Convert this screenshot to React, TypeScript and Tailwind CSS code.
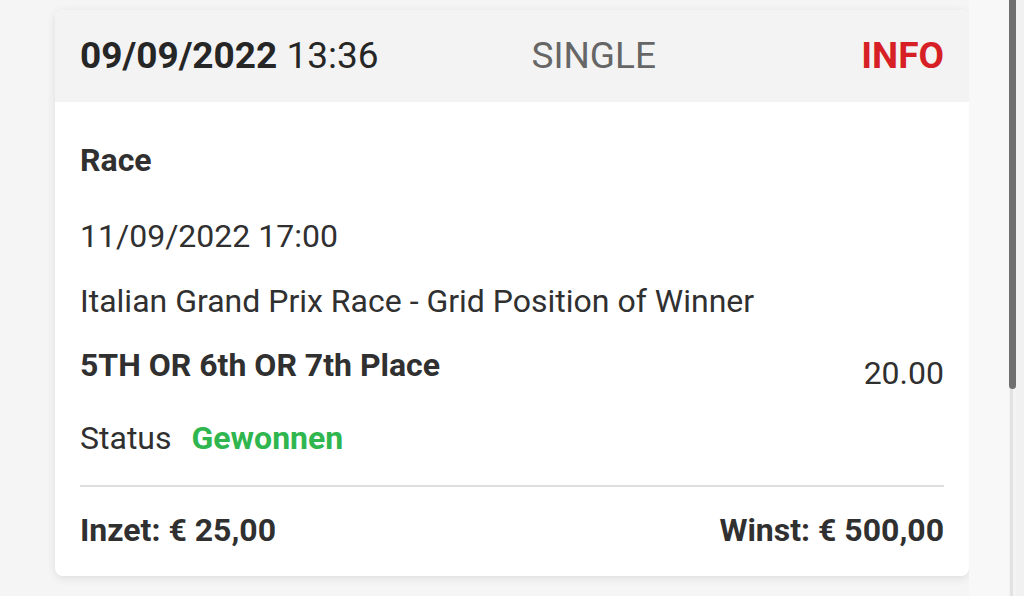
import React from 'react';

const BetCard = () => {
  return (
    <div className="w-[914px] h-[566px] bg-white rounded-lg shadow-[0_2px_10px_rgba(0,0,0,0.10)] overflow-hidden flex flex-col">
      {/* Header */}
      <div className="h-[92px] bg-[#f3f3f3] px-[25px] grid grid-cols-3 items-center text-[37px] leading-[44px]">
        <div className="text-[#262626] whitespace-nowrap">
          <span className="font-bold">09/09/2022</span> 13:36
        </div>
        <div className="text-right text-[#666666]">SINGLE</div>
        <div className="text-right font-bold text-[#d71f26]">INFO</div>
      </div>

      {/* Body */}
      <div className="px-[25px] pt-[38px] text-[32px] leading-[40px] text-[#303030]">
        <div className="font-bold">Race</div>
        <div className="mt-[36px]">11/09/2022 17:00</div>
        <div className="mt-[25px]">Italian Grand Prix Race - Grid Position of Winner</div>
        <div className="mt-[24px] flex justify-between items-start">
          <span className="font-bold">5TH OR 6th OR 7th Place</span>
          <span className="mt-[8px]">20.00</span>
        </div>
        <div className="mt-[25px] flex gap-[20px]">
          <span>Status</span>
          <span className="font-bold text-[#2fb64f]">Gewonnen</span>
        </div>
        <div className="mt-[27px] h-[2px] bg-[#dedede]"></div>
        <div className="mt-[23px] flex justify-between font-bold">
          <span>Inzet: € 25,00</span>
          <span>Winst: € 500,00</span>
        </div>
      </div>
    </div>
  );
};

export default function App() {
  return (
    <div className="w-[1024px] h-[596px] flex bg-[#f5f5f5] overflow-hidden" style={{ fontFamily: 'Roboto, "Open Sans", sans-serif' }}>
      <div className="pl-[55px] pt-[10px]">
        <BetCard />
      </div>
      <div className="flex-1 bg-[#f8f8f8]"></div>
      {/* Scrollbar */}
      <div className="w-[7px] flex flex-col bg-[#f3f3f3]">
        <div className="h-[389px] bg-[#6f6f6f] rounded-b-sm"></div>
        <div className="flex-1 w-[3px] ml-[1px] bg-[#e2e2e2]"></div>
      </div>
      <div className="w-[8px] bg-[#f1f1f1]"></div>
    </div>
  );
}
